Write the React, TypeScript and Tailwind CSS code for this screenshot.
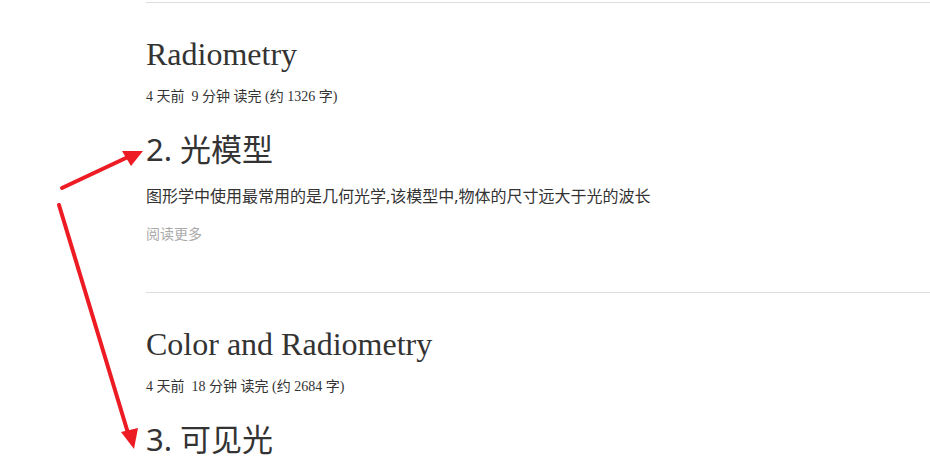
import React from 'react';

type Post = {
  title: string;
  meta: string;
  heading: string;
  excerpt?: string;
};

const posts: Post[] = [
  {
    title: 'Radiometry',
    meta: '4 天前\u00a0\u00a09 分钟 读完 (约 1326 字)',
    heading: '2. 光模型',
    excerpt: '图形学中使用最常用的是几何光学,该模型中,物体的尺寸远大于光的波长',
  },
  {
    title: 'Color and Radiometry',
    meta: '4 天前\u00a0\u00a018 分钟 读完 (约 2684 字)',
    heading: '3. 可见光',
  },
];

const PostItem: React.FC<{ post: Post }> = ({ post }) => (
  <article className="border-t border-[#dddddd] pt-[32px] pb-[48px]">
    <h1 className="font-['Liberation_Serif','Noto_Sans_CJK_SC',serif] text-[32px] leading-[38px] text-[#333333]">
      {post.title}
    </h1>
    <div className="mt-[15px] font-['Liberation_Serif','Noto_Sans_CJK_SC',serif] text-[14px] leading-[18px] text-[#333333]">
      {post.meta}
    </div>
    <h2 className="mt-[23px] font-['Noto_Sans','Noto_Sans_CJK_SC',sans-serif] text-[31px] leading-[40px] font-normal text-[#333333]">
      {post.heading}
    </h2>
    {post.excerpt && (
      <>
        <p className="mt-[15px] font-['Noto_Sans','Noto_Sans_CJK_SC',sans-serif] text-[16px] leading-[24px] text-[#333333]">
          {post.excerpt}
        </p>
        <a className="mt-[16px] block font-['Noto_Sans','Noto_Sans_CJK_SC',sans-serif] text-[14px] leading-[20px] text-[#aaaaaa]">
          阅读更多
        </a>
      </>
    )}
  </article>
);

const Arrows: React.FC = () => (
  <svg className="pointer-events-none absolute left-0 top-0" width="930" height="471">
    <g fill="#ed1c24" stroke="#ed1c24">
      <line x1="62" y1="188" x2="128" y2="157" strokeWidth="4" strokeLinecap="round" />
      <polygon points="143,151 122,151 131,166" stroke="none" />
      <line x1="59" y1="205" x2="128" y2="433" strokeWidth="4" strokeLinecap="round" />
      <polygon points="134,449 121,432 138,428" stroke="none" />
    </g>
  </svg>
);

export default function App() {
  return (
    <div className="relative h-[471px] w-[930px] overflow-hidden bg-white">
      <div className="ml-[146px] pt-[2px]">
        {posts.map((p) => (
          <PostItem key={p.title} post={p} />
        ))}
      </div>
      <Arrows />
    </div>
  );
}
